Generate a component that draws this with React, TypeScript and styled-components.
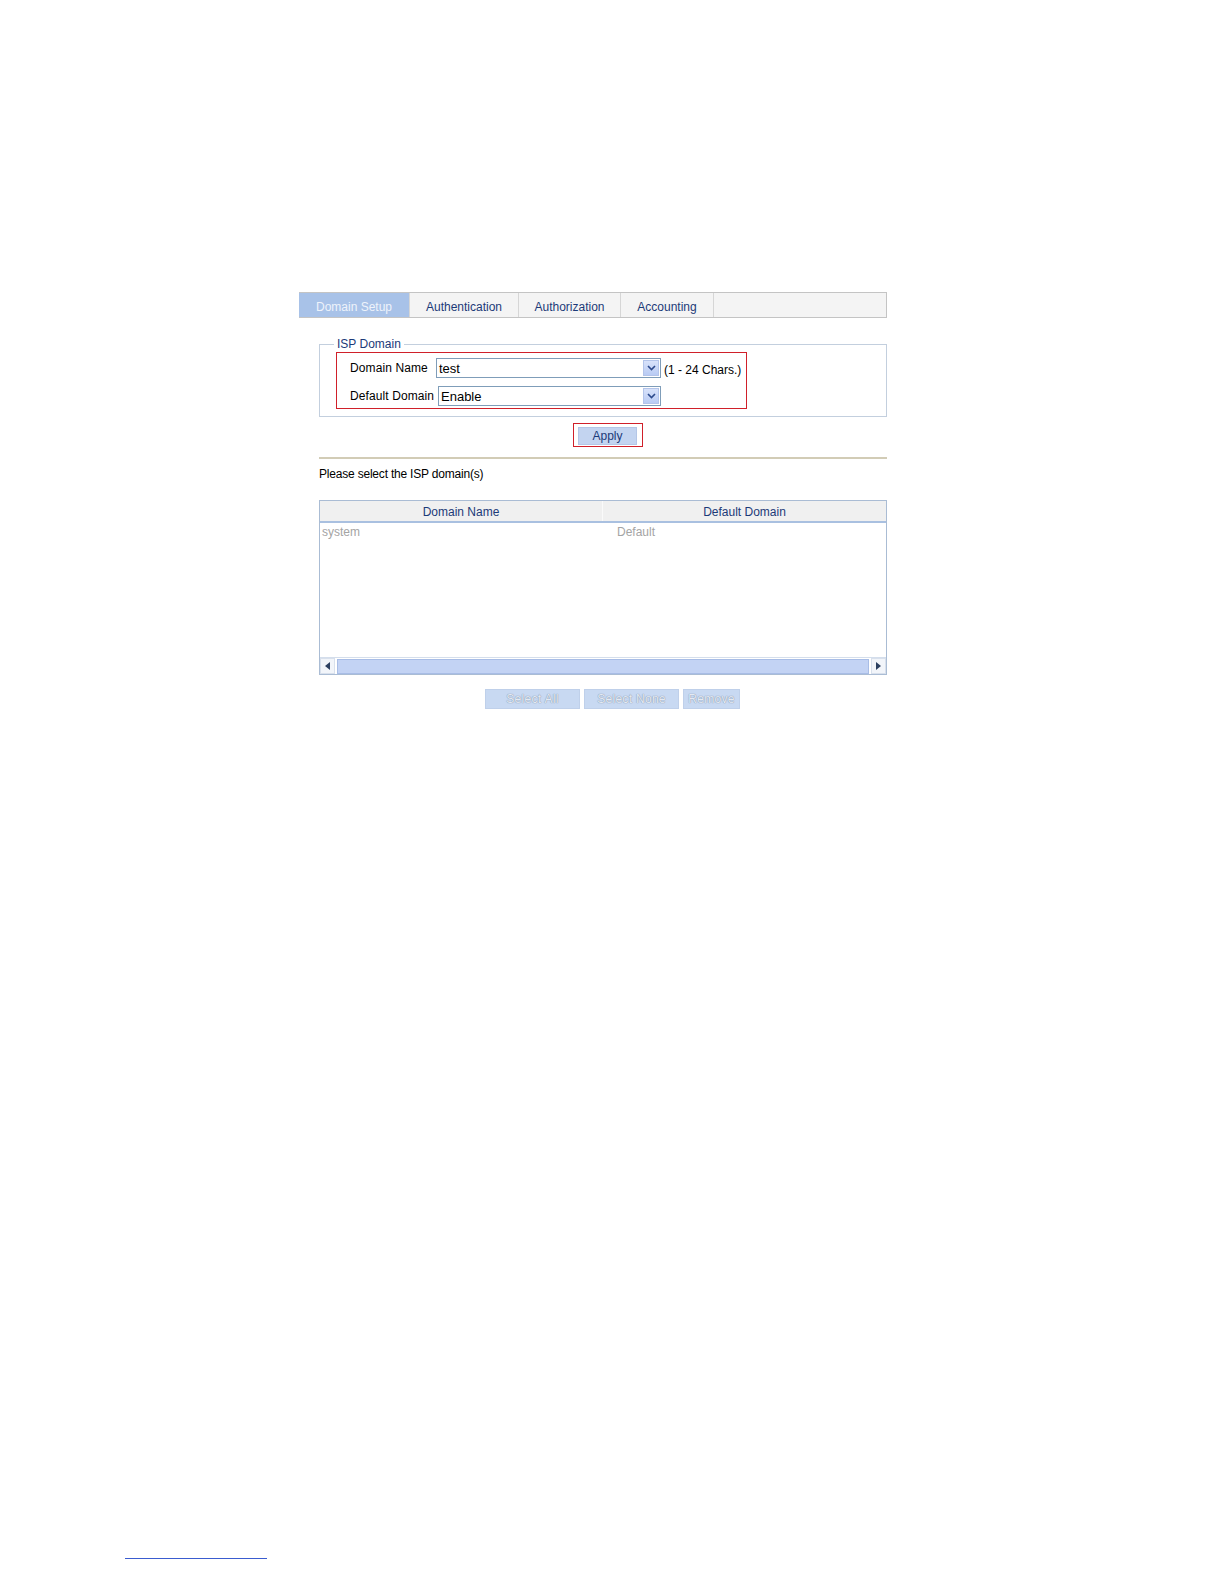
import React from "react";
import styled, { createGlobalStyle } from "styled-components";

const GlobalStyle = createGlobalStyle`
  html, body {
    margin: 0;
    padding: 0;
    background: #ffffff;
  }
  body {
    font-family: "Liberation Sans", Arial, sans-serif;
    font-size: 12px;
    color: #000;
  }
`;

const Sheet = styled.div`
  position: relative;
  width: 1224px;
  height: 1584px;
  overflow: hidden;
`;

const Panel = styled.div`
  width: 588px;
  padding: 292px 0 0 299px;
`;

const TabBar = styled.div`
  display: flex;
  height: 24px;
  border: 1px solid #c4c4c4;
  border-left: none;
  background: #f4f4f4;
`;

const Tab = styled.div<{ $active?: boolean; $w: number }>`
  width: ${(p) => p.$w}px;
  display: flex;
  align-items: flex-end;
  justify-content: center;
  padding-bottom: 3px;
  box-sizing: border-box;
  border-right: 1px solid #d6d6d6;
  background: ${(p) => (p.$active ? "#a8c2e8" : "transparent")};
  color: ${(p) => (p.$active ? "#eef3fb" : "#1c3a78")};
  font-size: 12px;
`;

const Content = styled.div`
  padding-left: 20px;
`;

const Fieldset = styled.fieldset`
  margin: 19px 0 0 0;
  padding: 0 0 7px 0;
  border: 1px solid #c3cfde;
  min-width: 0;
`;

const Legend = styled.legend`
  margin-left: 14px;
  padding: 0 3px;
  color: #1c3a78;
  font-size: 12px;
  line-height: 14px;
`;

const Highlight = styled.div`
  margin: 1px 0 0 16px;
  width: 396px;
  height: 52px;
  border: 1px solid #d0202a;
  padding: 3px 0 0 13px;
  display: grid;
  grid-template-columns: 86px auto;
  row-gap: 5px;
  align-items: center;
`;

const Label = styled.div`
  font-size: 12px;
  white-space: nowrap;
  letter-spacing: 0.1px;
`;

const FieldCell = styled.div<{ $shift?: number }>`
  display: flex;
  align-items: center;
  margin-left: ${(p) => p.$shift ?? 0}px;
`;

const Select = styled.div<{ $w: number }>`
  width: ${(p) => p.$w}px;
  height: 20px;
  box-sizing: border-box;
  border: 1px solid #7f9db9;
  background: #fff;
  display: flex;
  align-items: stretch;
`;

const SelectValue = styled.div`
  flex: 1;
  padding: 2px 0 0 2px;
  font-size: 13px;
  line-height: 16px;
`;

const SelectArrow = styled.div`
  width: 16px;
  margin: 1px;
  background: linear-gradient(#d8e2fa, #b9cbf4);
  border: 1px solid #b3c4ea;
  box-sizing: border-box;
  display: flex;
  align-items: center;
  justify-content: center;
`;

const Hint = styled.span`
  margin-left: 3px;
  padding-top: 4px;
  font-size: 12px;
  white-space: nowrap;
`;

const ApplyRow = styled.div`
  display: flex;
  justify-content: center;
  padding: 6px 0 0 10px;
`;

const RedFrame = styled.div`
  border: 1px solid #d0202a;
  padding: 3px 5px 1px 4px;
`;

const Button = styled.button<{ $w: number; $disabled?: boolean }>`
  width: ${(p) => p.$w}px;
  height: ${(p) => (p.$disabled ? 20 : 18)}px;
  padding: 0;
  border: 1px solid ${(p) => (p.$disabled ? "#bfd0ea" : "#b4c6e6")};
  background: ${(p) => (p.$disabled ? "#c8d9f2" : "#c3d4f0")};
  color: ${(p) => (p.$disabled ? "#e4eaf3" : "#1c3a78")};
  text-shadow: ${(p) =>
    p.$disabled ? "0 0 1px #8797ae, 0 0 1px #8797ae" : "none"};
  font-family: "Liberation Sans", Arial, sans-serif;
  font-size: 12px;
  line-height: 16px;
  letter-spacing: ${(p) => (p.$disabled ? "0.3px" : "0")};
`;

const Divider = styled.div`
  margin-top: 10px;
  height: 2px;
  background: #d2ccb6;
`;

const Prompt = styled.div`
  margin-top: 8px;
  font-size: 12px;
  line-height: 14px;
  letter-spacing: -0.2px;
`;

const Table = styled.div`
  margin-top: 19px;
  height: 175px;
  box-sizing: border-box;
  border: 1px solid #aabcd4;
  display: flex;
  flex-direction: column;
`;

const HeadRow = styled.div`
  display: grid;
  grid-template-columns: 1fr 1fr;
  height: 20px;
  background: #f0f0f0;
  border-bottom: 2px solid #a9c0e0;
`;

const HeadCell = styled.div<{ $last?: boolean }>`
  display: flex;
  align-items: flex-end;
  justify-content: center;
  padding-bottom: 2px;
  color: #1c3a78;
  font-size: 12px;
  border-right: ${(p) => (p.$last ? "none" : "1px solid #fafafa")};
`;

const Body = styled.div`
  flex: 1;
`;

const BodyRow = styled.div`
  display: grid;
  grid-template-columns: 295px 1fr;
  padding: 2px 0 0 2px;
  color: #a4a4a4;
  font-size: 12px;
`;

const ScrollBar = styled.div`
  height: 16px;
  display: flex;
  align-items: stretch;
  gap: 2px;
  border-top: 1px solid #d4deec;
`;

const ScrollButton = styled.div`
  width: 15px;
  box-sizing: border-box;
  border: 1px solid #d8e0ec;
  background: #f2f5fa;
  display: flex;
  align-items: center;
  justify-content: center;
`;

const ScrollTrack = styled.div`
  flex: 1;
  margin-top: 1px;
  background: #c3d3f4;
  border: 1px solid #a8bde6;
`;

const ButtonRow = styled.div`
  display: flex;
  justify-content: center;
  gap: 4px;
  padding: 14px 0 0 19px;
`;

const FootRule = styled.div`
  position: absolute;
  left: 125px;
  top: 1558px;
  width: 142px;
  height: 1px;
  background: #3a5cd0;
`;

const Chevron = () => (
  <svg width="9" height="6" viewBox="0 0 9 6">
    <path d="M1 1 L4.5 4.5 L8 1" fill="none" stroke="#2c4a8c" strokeWidth="1.6" />
  </svg>
);

const Triangle = ({ dir }: { dir: "left" | "right" }) => (
  <svg width="5" height="8" viewBox="0 0 5 8">
    <path d={dir === "left" ? "M5 0 L0 4 L5 8 Z" : "M0 0 L5 4 L0 8 Z"} fill="#2c4060" />
  </svg>
);

const tabs = [
  { label: "Domain Setup", w: 111, active: true },
  { label: "Authentication", w: 109 },
  { label: "Authorization", w: 102 },
  { label: "Accounting", w: 93 },
];

const domains = [{ name: "system", def: "Default" }];

export default function App() {
  return (
    <Sheet>
      <GlobalStyle />
      <Panel>
        <TabBar>
          {tabs.map((t) => (
            <Tab key={t.label} $w={t.w} $active={t.active}>
              {t.label}
            </Tab>
          ))}
        </TabBar>
        <Content>
          <Fieldset>
            <Legend>ISP Domain</Legend>
            <Highlight>
              <Label>Domain Name</Label>
              <FieldCell>
                <Select $w={225}>
                  <SelectValue>test</SelectValue>
                  <SelectArrow>
                    <Chevron />
                  </SelectArrow>
                </Select>
                <Hint>(1 - 24 Chars.)</Hint>
              </FieldCell>
              <Label>Default Domain</Label>
              <FieldCell $shift={2}>
                <Select $w={223}>
                  <SelectValue>Enable</SelectValue>
                  <SelectArrow>
                    <Chevron />
                  </SelectArrow>
                </Select>
              </FieldCell>
            </Highlight>
          </Fieldset>
          <ApplyRow>
            <RedFrame>
              <Button $w={59}>Apply</Button>
            </RedFrame>
          </ApplyRow>
          <Divider />
          <Prompt>Please select the ISP domain(s)</Prompt>
          <Table>
            <HeadRow>
              <HeadCell>Domain Name</HeadCell>
              <HeadCell $last>Default Domain</HeadCell>
            </HeadRow>
            <Body>
              {domains.map((d) => (
                <BodyRow key={d.name}>
                  <span>{d.name}</span>
                  <span>{d.def}</span>
                </BodyRow>
              ))}
            </Body>
            <ScrollBar>
              <ScrollButton>
                <Triangle dir="left" />
              </ScrollButton>
              <ScrollTrack />
              <ScrollButton>
                <Triangle dir="right" />
              </ScrollButton>
            </ScrollBar>
          </Table>
          <ButtonRow>
            <Button $w={95} $disabled>
              Select All
            </Button>
            <Button $w={95} $disabled>
              Select None
            </Button>
            <Button $w={57} $disabled>
              Remove
            </Button>
          </ButtonRow>
        </Content>
      </Panel>
      <FootRule />
    </Sheet>
  );
}
